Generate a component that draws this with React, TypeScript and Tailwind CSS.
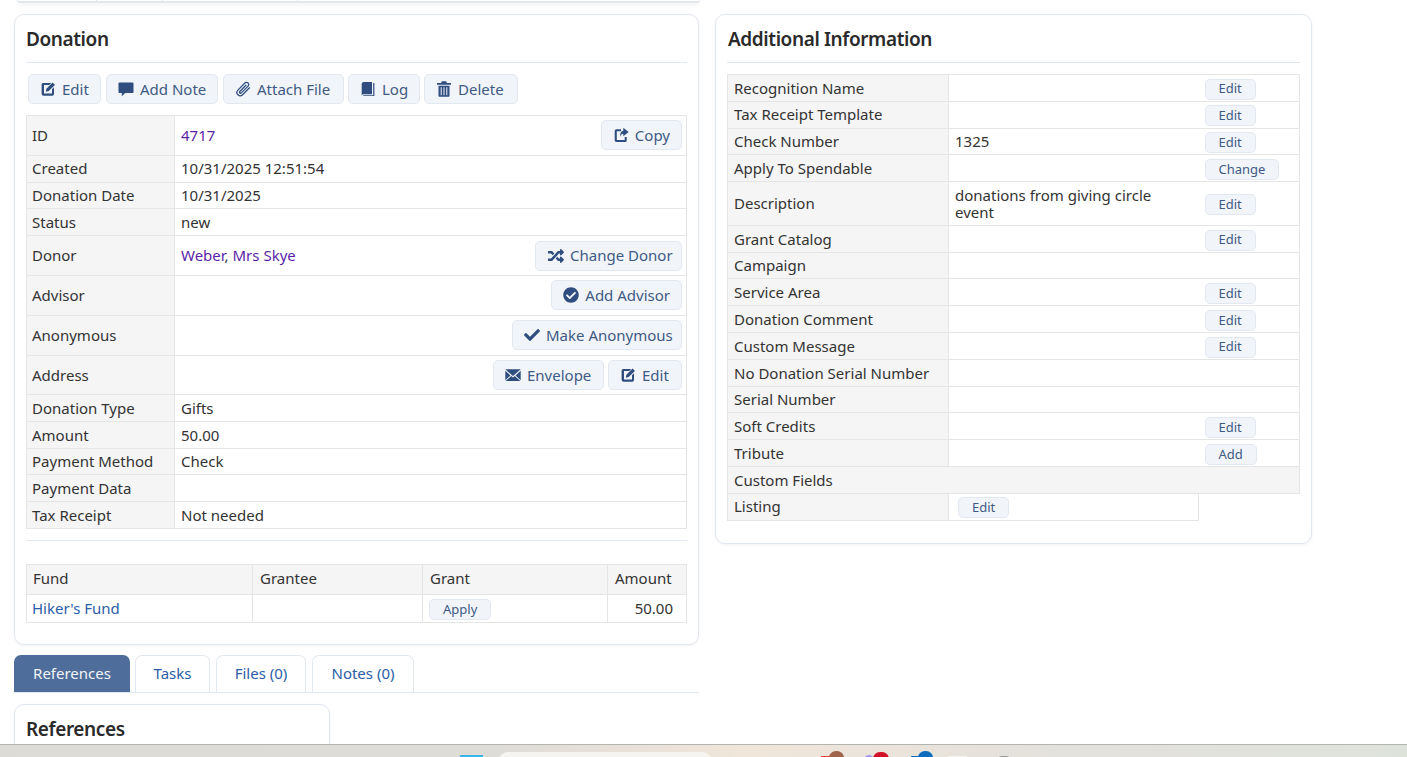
import React from "react";
import { FaRandom, FaCheckCircle, FaCheck } from "react-icons/fa";

const ic = "w-[16px] h-[16px] text-[#2f4d7e] shrink-0";
const EditIcon = () => (
  <svg viewBox="0 0 16 16" className={ic} fill="currentColor">
    <path d="M3 2h8.200l-2 2H4v8.500h8V8.300l2-2v6.500A1.800 1.800 0 0 1 12.200 14.700H3.600A2 2 0 0 1 1.600 12.700V3.500A1.600 1.600 0 0 1 3 2z" />
    <path d="M5.800 10.700l.6-2.900L12.600 1.600l2.300 2.300-6.200 6.200z" />
  </svg>
);
const CommentIcon = () => (
  <svg viewBox="0 0 16 16" className={ic} fill="currentColor">
    <path d="M1.300 1.500h13.400a.8.8 0 0 1 .8.8v8.900a.8.8 0 0 1-.8.8H7.200l-3.400 3.300v-3.300H1.300a.8.8 0 0 1-.8-.8V2.300a.8.8 0 0 1 .8-.8z" />
  </svg>
);
const ClipIcon = () => (
  <svg viewBox="0 0 16 16" className={ic} fill="none" stroke="currentColor" strokeWidth="1.250" strokeLinecap="round">
    <path d="M14.500 6.800 7.600 13.700a3.200 3.200 0 0 1-4.700-4.600L9.900 2a2.200 2.200 0 0 1 3.200 3.100L6.300 11.900a1 1 0 0 1-1.500-1.400L11 4.300" />
  </svg>
);
const BookIcon = () => (
  <svg viewBox="0 0 16 16" className={ic} fill="currentColor">
    <path d="M1.700 3c0-1 .8-1.700 1.800-2H12v12.300H3.500c-.8 0-1.800.6-1.800 1.700z" />
    <path d="M13.200 2h1.200v13H3.500l-.5-.7h10.200z" />
  </svg>
);
const TrashIcon = () => (
  <svg viewBox="0 0 16 16" className={ic} fill="currentColor">
    <path d="M5.700.3h4.600l.5 1.700H15v1.700H1V2h4.200z" />
    <path d="M2.500 4.700h11V15a.8.8 0 0 1-.8.8H3.300a.8.8 0 0 1-.8-.8zM4.700 6.200v8h1v-8zm2.800 0v8h1v-8zm2.800 0v8h1v-8z" fillRule="evenodd" />
  </svg>
);
const CopyIcon = () => (
  <svg viewBox="0 0 16 16" className={ic} fill="currentColor">
    <path d="M3.500 2.300H8v2H3.800v8.700h7.900v-3h2v3.500a1.500 1.500 0 0 1-1.500 1.500H3.500A1.800 1.800 0 0 1 1.700 13V4.100A1.800 1.800 0 0 1 3.500 2.300z" />
    <path d="M10.300.8l5.400 4.200-5.400 4.200V6.800C8.500 6.800 7.500 8 7 10.200c-.2-3.700 1-6.200 3.300-6.500z" />
  </svg>
);
const MailIcon = () => (
  <svg viewBox="0 0 16 16" className={ic} fill="currentColor">
    <path d="M.3 2.300h15.400L8 9zM.3 3.800v9.400l5.200-4.800zM15.700 3.800v9.400l-5.200-4.800zM6.300 9.100 8 10.600l1.700-1.500 5.700 5H.6z" />
  </svg>
);

function Btn({ icon, children, className = "" }: { icon?: React.ReactNode; children: React.ReactNode; className?: string }) {
  return (
    <button className={`h-[30px] inline-flex items-center gap-[6px] px-[11px] rounded-[5px] border border-[#e2e8f0] bg-[#f1f5f9] text-[15px] text-[#3f5a85] whitespace-nowrap ${className}`}>
      {icon}
      {children}
    </button>
  );
}
function SmallBtn({ children }: { children: React.ReactNode }) {
  return (
    <button className="h-[21px] inline-flex items-center justify-center px-[13px] rounded-[5px] border border-[#e2e8f0] bg-[#f1f5f9] text-[13px] text-[#3f5a85] whitespace-nowrap align-middle">
      {children}
    </button>
  );
}

const th = "border border-[#e5e5e5] bg-[#f5f5f5] pl-[5px] pr-[6px] font-normal text-left text-[#333] align-middle";
const td = "border border-[#e5e5e5] px-[6px] text-[#333] align-middle";

function Row({ label, h, children, action }: { label: string; h: string; children?: React.ReactNode; action?: React.ReactNode }) {
  return (
    <tr className={h}>
      <td className={th}>{label}</td>
      <td className={td}>
        <div className="flex items-center justify-between -mr-[2px]">
          <span>{children}</span>
          {action && <span className="flex gap-1">{action}</span>}
        </div>
      </td>
    </tr>
  );
}

function Card({ title, className, titleClass = "", children }: { title: string; className: string; titleClass?: string; children?: React.ReactNode }) {
  return (
    <section className={`bg-white border border-[#e2e8f0] rounded-[10px] shadow-[0_1px_3px_rgba(0,0,0,0.06)] px-[11px] ${className}`}>
      <h2 className={`h-[48px] pt-[9px] text-[19px] tracking-[-0.4px] leading-[30px] font-semibold text-[#2a2a2a] border-b border-[#e2e8f0] ${titleClass}`}>{title}</h2>
      {children}
    </section>
  );
}

const infoTh = "border border-[#e5e5e5] bg-[#f5f5f5] pl-[6px] pr-[6px] font-normal text-left text-[#333] align-middle";

function InfoRow({ label, h = "h-[26.8px]", value, btn }: { label: string; h?: string; value?: React.ReactNode; btn?: string }) {
  return (
    <tr className={h}>
      <td className={infoTh}>{label}</td>
      <td className="border-y border-[#e5e5e5] px-[6px] text-[#333] align-middle leading-[17px]">{value}</td>
      <td className="border-y border-r border-[#e5e5e5] px-[6px] align-middle">{btn && <SmallBtn>{btn}</SmallBtn>}</td>
    </tr>
  );
}

const Tab = ({ active, children, className }: { active?: boolean; children: React.ReactNode; className: string }) => (
  <div className={`h-[37px] flex items-center justify-center rounded-t-[7px] ${active ? "bg-[#4f6d9a] text-[#f1f5f9]" : "bg-white border border-b-0 border-[#e2e8f0] text-[#2b5ea8] pb-[1px]"} ${className}`}>
    {children}
  </div>
);

export default function App() {
  const s = "h-[26.8px]";
  const t = "h-[39.8px]";
  return (
    <div className="h-[757px] w-[1407px] overflow-hidden flex flex-col bg-white text-[15px] font-['Noto_Sans','Liberation_Sans',sans-serif]">
      <div className="flex-1 min-h-0 overflow-hidden">
        <div className="ml-[17px] mr-[707px] h-[3px] flex border-b-2 border-[#e2e7ed] rounded-b-[3px] shadow-[0_2px_5px_rgba(0,0,0,0.07)]">
          <div className="w-[80px] border-r border-[#e5e5e5]" />
          <div className="w-[66px] border-r border-[#e5e5e5]" />
          <div className="w-[135px] border-r border-[#e5e5e5]" />
        </div>
        <div className="flex items-start gap-4 pl-[14px] pt-[11px]">
          <div className="w-[685px] shrink-0">
            <Card title="Donation" className="h-[631px]">
              <div className="flex gap-1 pl-[2px] pt-[11px]">
                <Btn className="w-[73px]" icon={<EditIcon />}>Edit</Btn>
                <Btn className="w-[112px] ml-[1px]" icon={<CommentIcon />}>Add Note</Btn>
                <Btn className="w-[121px] ml-[1px]" icon={<ClipIcon />}>Attach File</Btn>
                <Btn className="w-[72px]" icon={<BookIcon />}>Log</Btn>
                <Btn className="w-[94px]" icon={<TrashIcon />}>Delete</Btn>
              </div>
              <table className="w-[661px] mt-[11px] border-collapse table-fixed">
                <colgroup><col className="w-[148px]" /><col /></colgroup>
                <tbody>
                  <Row label="ID" h={t} action={<Btn icon={<CopyIcon />}>Copy</Btn>}><span className="text-[#5b1fa8]">4717</span></Row>
                  <Row label="Created" h={s}>10/31/2025 12:51:54</Row>
                  <Row label="Donation Date" h={s}>10/31/2025</Row>
                  <Row label="Status" h={s}>new</Row>
                  <Row label="Donor" h={t} action={<Btn className="w-[147px]" icon={<FaRandom className="w-[18px] h-[16px] -mr-[1px] text-[#2f4d7e] shrink-0" />}>Change Donor</Btn>}><span className="text-[#5b1fa8]">Weber</span>, <span className="text-[#5b1fa8]">Mrs Skye</span></Row>
                  <Row label="Advisor" h={t} action={<Btn icon={<FaCheckCircle className={ic} />}>Add Advisor</Btn>} />
                  <Row label="Anonymous" h={t} action={<Btn className="w-[170px]" icon={<FaCheck className={ic} />}>Make Anonymous</Btn>} />
                  <Row label="Address" h={t} action={<><Btn className="w-[111px]" icon={<MailIcon />}>Envelope</Btn><Btn className="w-[74px]" icon={<EditIcon />}>Edit</Btn></>} />
                  <Row label="Donation Type" h={s}>Gifts</Row>
                  <Row label="Amount" h={s}>50.00</Row>
                  <Row label="Payment Method" h="h-[26.5px]">Check</Row>
                  <Row label="Payment Data" h={s} />
                  <Row label="Tax Receipt" h={s}>Not needed</Row>
                </tbody>
              </table>
              <hr className="mt-[11px] border-[#e2e8f0]" />
              <table className="w-[661px] mt-[23px] border-collapse table-fixed">
                <colgroup><col className="w-[226px]" /><col className="w-[170px]" /><col className="w-[185px]" /><col /></colgroup>
                <tbody>
                  <tr className="h-[30px]">
                    <td className={`${th} pl-[6px] pb-[2px]`}>Fund</td>
                    <td className={`${th} pl-[7px] pb-[2px]`}>Grantee</td>
                    <td className={`${th} pl-[7px] pb-[2px]`}>Grant</td>
                    <td className={`${th} pl-[7px] pb-[2px]`}>Amount</td>
                  </tr>
                  <tr className="h-[27.5px]">
                    <td className="border border-[#e5e5e5] pl-[5px] align-middle text-[#2b5ea8]">Hiker's Fund</td>
                    <td className={td} />
                    <td className={td}><SmallBtn>Apply</SmallBtn></td>
                    <td className={`${td} text-right pr-[13px]`}>50.00</td>
                  </tr>
                </tbody>
              </table>
            </Card>
            <div className="mt-[10px] flex gap-[5px] border-b border-[#e2e8f0] h-[38px]">
              <Tab active className="w-[116px]">References</Tab>
              <Tab className="w-[75px]">Tasks</Tab>
              <Tab className="w-[90px] ml-[1px]">Files (0)</Tab>
              <Tab className="w-[102px] ml-[1px]">Notes (0)</Tab>
            </div>
            <Card title="References" className="w-[316px] mt-[11px] h-[100px]" />
          </div>
          <div className="w-[597px] shrink-0">
            <Card title="Additional Information" titleClass="pl-[1px]" className="h-[530px]">
              <table className="w-[573px] mt-[11px] border-collapse table-fixed">
                <colgroup><col className="w-[221px]" /><col className="w-[250px]" /><col /></colgroup>
                <tbody>
                  <InfoRow label="Recognition Name" btn="Edit" />
                  <InfoRow label="Tax Receipt Template" btn="Edit" />
                  <InfoRow label="Check Number" value="1325" btn="Edit" />
                  <InfoRow label="Apply To Spendable" btn="Change" />
                  <InfoRow label="Description" h="h-[43.7px]" value={<>donations from giving circle<br />event</>} btn="Edit" />
                  <InfoRow label="Grant Catalog" btn="Edit" />
                  <InfoRow label="Campaign" />
                  <InfoRow label="Service Area" btn="Edit" />
                  <InfoRow label="Donation Comment" btn="Edit" />
                  <InfoRow label="Custom Message" btn="Edit" />
                  <InfoRow label="No Donation Serial Number" />
                  <InfoRow label="Serial Number" />
                  <InfoRow label="Soft Credits" btn="Edit" />
                  <InfoRow label="Tribute" btn="Add" />
                  <tr className={s}><td colSpan={3} className="bg-[#f5f5f5] border-l border-t border-r border-[#e5e5e5] pl-[6px] text-[#333] align-middle">Custom Fields</td></tr>
                  <tr className={s}>
                    <td className={infoTh}>Listing</td>
                    <td className={`${td} pl-[9px]`}><SmallBtn>Edit</SmallBtn></td>
                    <td className="border-t border-[#e5e5e5]" />
                  </tr>
                </tbody>
              </table>
            </Card>
          </div>
        </div>
      </div>
      <div className="h-[13px] shrink-0 border-t border-[#b5b5b0] bg-[linear-gradient(90deg,#dcdbd6_0%,#dedcd6_35%,#f0e6da_53%,#e3e1db_75%,#dee3da_100%)] relative overflow-hidden">
        <div className="absolute left-[460px] top-[10px] w-[23px] h-[6px] bg-[#38b4e8]" />
        <div className="absolute left-[498px] top-[7px] w-[214px] h-[10px] rounded-t-[10px] bg-[#f5f4f1]" />
        <div className="absolute left-[829px] top-[6px] w-[15px] h-[14px] rounded-full bg-[#a0634c]" />
        <div className="absolute left-[821px] top-[11px] w-[9px] h-[8px] bg-[#e2452f]" />
        <div className="absolute left-[864px] top-[10px] w-[10px] h-[10px] rounded-full bg-[#a79be8]" />
        <div className="absolute left-[873px] top-[7px] w-[16px] h-[14px] rounded-full bg-[#d3122a]" />
        <div className="absolute left-[918px] top-[6px] w-[15px] h-[14px] rounded-full bg-[#0f6cbd]" />
        <div className="absolute left-[911px] top-[11px] w-[9px] h-[8px] bg-[#0f6cbd]" />
        <div className="absolute left-[948px] top-[11px] w-[19px] h-[8px] bg-[#f4f4f2]" />
        <div className="absolute left-[996px] top-[11px] w-[16px] h-[12px] rounded-full border border-[#9a9a9a] bg-[#f2f2f0]" />
      </div>
    </div>
  );
}
